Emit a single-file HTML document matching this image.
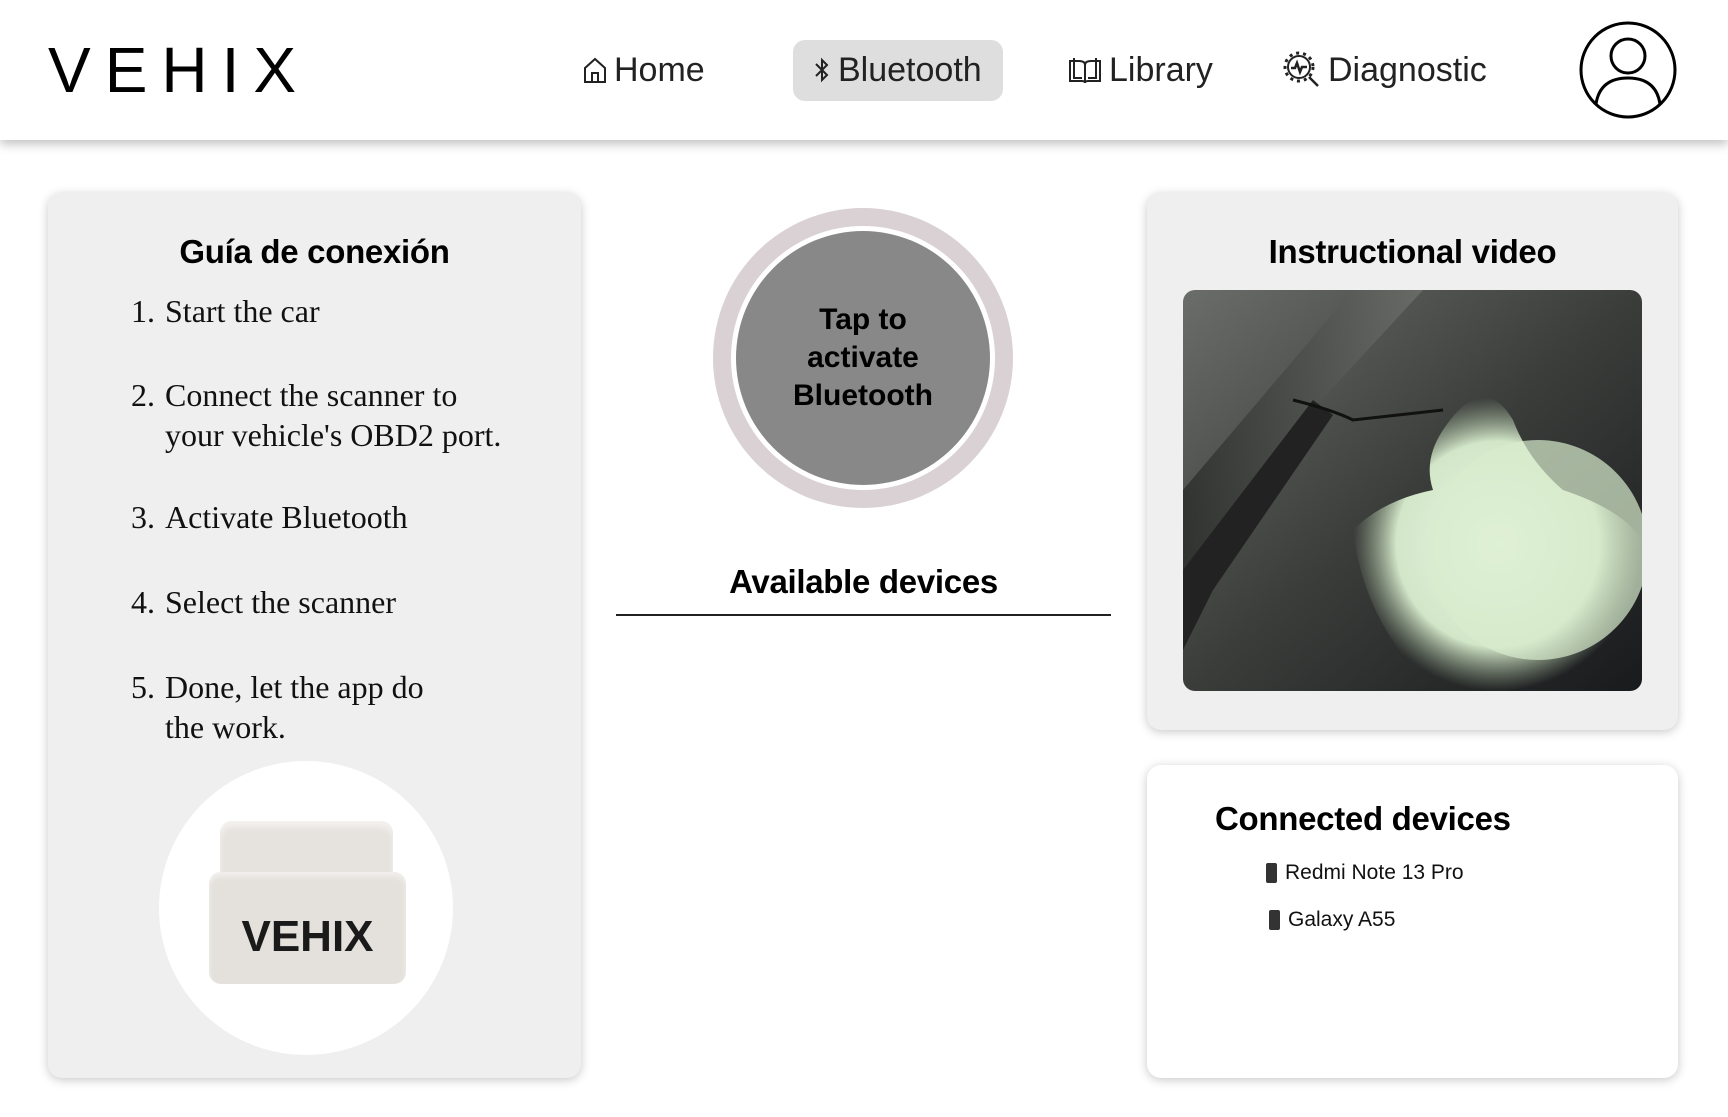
<!DOCTYPE html>
<html><head><meta charset="utf-8"><style>
*{margin:0;padding:0;box-sizing:border-box}
body{width:1728px;height:1117px;background:#fff;position:relative;overflow:hidden;font-family:"Liberation Sans",sans-serif;color:#111}
.hdr{position:absolute;left:0;top:0;width:1728px;height:140px;background:#fff;box-shadow:0 4px 10px rgba(0,0,0,.25)}
.logo{position:absolute;left:48px;top:38px;font-size:64px;font-weight:300;letter-spacing:14px;color:#000;line-height:64px}
.nav{position:absolute;top:48px;font-size:34px;line-height:44px;color:#222;display:flex;align-items:center;gap:6px}
.pill{position:absolute;left:793px;top:40px;width:210px;height:61px;background:#dedede;border-radius:12px}
.card{position:absolute;border-radius:14px;box-shadow:0 2px 10px rgba(0,0,0,.22)}
h2{position:absolute;font-size:33px;font-weight:bold;color:#000;white-space:nowrap;letter-spacing:-0.3px}
.li{position:absolute;font-family:"Liberation Serif",serif;font-size:32px;line-height:40px;color:#111}
.li span{position:absolute;left:0}
.li div{padding-left:34px}
.dev{position:absolute;font-size:21px;color:#111;display:flex;align-items:center;gap:8px}
</style></head><body>
<div class="hdr">
<div class="logo">VEHIX</div>
<div class="pill"></div>
<div class="nav" style="left:582px"><svg width="26" height="28" viewBox="0 0 26 28"><path d="M3 12 L13 3 L23 12 V26 H3 Z M10 26 V17 H16 V26" fill="none" stroke="#222" stroke-width="2"/></svg>Home</div>
<div class="nav" style="left:812px"><svg width="20" height="30" viewBox="0 0 20 30"><path d="M4 9 L15 20 L10 25 V5 L15 10 L4 21" fill="none" stroke="#222" stroke-width="2"/></svg>Bluetooth</div>
<div class="nav" style="left:1067px"><svg width="36" height="30" viewBox="0 0 36 30"><path d="M3 6 H12 Q18 6 18 10 Q18 6 24 6 H33 V26 H21 Q18 26 18 28 Q18 26 15 26 H3 Z M18 10 V28 M7 3 V23 H15 M29 3 V23 H21" fill="none" stroke="#222" stroke-width="2"/></svg>Library</div>
<div class="nav" style="left:1282px"><svg width="40" height="40" viewBox="0 0 40 40"><circle cx="17" cy="17" r="11" fill="none" stroke="#222" stroke-width="2"/><circle cx="17" cy="17" r="14" fill="none" stroke="#222" stroke-width="3" stroke-dasharray="3 4"/><path d="M9 18 H13 L15 13 L18 22 L20 17 H25 M27 27 L36 36" fill="none" stroke="#222" stroke-width="2.5"/></svg>Diagnostic</div>
<svg style="position:absolute;left:1578px;top:20px" width="100" height="100" viewBox="0 0 100 100"><circle cx="50" cy="50" r="47" fill="none" stroke="#000" stroke-width="3"/><circle cx="50" cy="36" r="17" fill="none" stroke="#000" stroke-width="3"/><path d="M18 84 Q22 58 50 58 Q78 58 82 84" fill="none" stroke="#000" stroke-width="3"/></svg>
</div>

<div class="card" style="left:48px;top:193px;width:533px;height:885px;background:#efefef"></div>
<h2 style="left:48px;width:533px;text-align:center;top:233px">Guía de conexión</h2>
<div class="li" style="left:131px;top:291px"><span>1.</span><div>Start the car</div></div>
<div class="li" style="left:131px;top:375px"><span>2.</span><div>Connect the scanner to<br>your vehicle's OBD2 port.</div></div>
<div class="li" style="left:131px;top:497px"><span>3.</span><div>Activate Bluetooth</div></div>
<div class="li" style="left:131px;top:582px"><span>4.</span><div>Select the scanner</div></div>
<div class="li" style="left:131px;top:667px"><span>5.</span><div>Done, let the app do<br>the work.</div></div>
<div style="position:absolute;left:159px;top:761px;width:294px;height:294px;border-radius:50%;background:#fff"></div>
<div style="position:absolute;left:220px;top:821px;width:173px;height:70px;border-radius:12px;background:#e6e3df;box-shadow:inset 0 6px 6px #f3f1ee"></div>
<div style="position:absolute;left:209px;top:872px;width:197px;height:112px;border-radius:12px;background:#e4e1dc;box-shadow:inset 0 4px 6px #f2f0ed"></div>
<div style="position:absolute;left:209px;top:912px;width:197px;text-align:center;font-size:44px;font-weight:bold;color:#1a1a1a">VEHIX</div>

<div style="position:absolute;left:713px;top:208px;width:300px;height:300px;border-radius:50%;background:#d9d1d3"></div>
<div style="position:absolute;left:731px;top:226px;width:264px;height:264px;border-radius:50%;background:#fff"></div>
<div style="position:absolute;left:736px;top:231px;width:254px;height:254px;border-radius:50%;background:#888"></div>
<div style="position:absolute;left:736px;top:301px;width:254px;text-align:center;font-size:30px;font-weight:bold;line-height:38px;color:#000">Tap to<br>activate<br>Bluetooth</div>
<h2 style="left:616px;width:495px;text-align:center;top:563px">Available devices</h2>
<div style="position:absolute;left:616px;top:614px;width:495px;height:2px;background:#222"></div>

<div class="card" style="left:1147px;top:193px;width:531px;height:537px;background:#efefef"></div>
<h2 style="left:1147px;width:531px;text-align:center;top:233px">Instructional video</h2>
<svg style="position:absolute;left:1183px;top:290px;border-radius:12px" width="459" height="401" viewBox="0 0 459 401">
<defs><linearGradient id="g" x1="0" y1="0" x2="1" y2="1"><stop offset="0" stop-color="#6a6d69"/><stop offset=".5" stop-color="#3a3d3a"/><stop offset="1" stop-color="#181a1c"/></linearGradient>
<radialGradient id="h" cx=".5" cy=".5" r=".5"><stop offset="0" stop-color="#eef8e6"/><stop offset=".7" stop-color="#d2e6c8"/><stop offset="1" stop-color="#9fb296" stop-opacity="0"/></radialGradient>
<linearGradient id="s" x1="0" y1="0" x2="1" y2="0"><stop offset="0" stop-color="#2a2c2a"/><stop offset="1" stop-color="#6d706b"/></linearGradient></defs>
<rect width="459" height="401" fill="url(#g)"/>
<path d="M0 200 L170 0 L240 0 L120 130 L0 330 Z" fill="url(#s)" opacity=".8"/>
<path d="M0 280 L130 110 L150 125 L30 300 L0 360Z" fill="#222"/>
<path d="M110 110 Q150 120 170 130 L260 120" stroke="#111" stroke-width="3" fill="none"/>
<path d="M260 140 Q300 80 330 130 Q345 170 380 200 Q440 220 459 250 V401 H250 Q180 330 170 240 Q200 210 250 200 Q240 170 260 140Z" fill="url(#h)"/>
<ellipse cx="355" cy="260" rx="110" ry="110" fill="#d8eccd" opacity=".7"/>
</svg>

<div class="card" style="left:1147px;top:765px;width:531px;height:313px;background:#fff"></div>
<h2 style="left:1215px;top:800px">Connected devices</h2>
<div class="dev" style="left:1266px;top:861px"><span style="display:inline-block;width:11px;height:20px;background:#333;border-radius:2px"></span>Redmi Note 13 Pro</div>
<div class="dev" style="left:1269px;top:908px"><span style="display:inline-block;width:11px;height:20px;background:#333;border-radius:2px"></span>Galaxy A55</div>
</body></html>
